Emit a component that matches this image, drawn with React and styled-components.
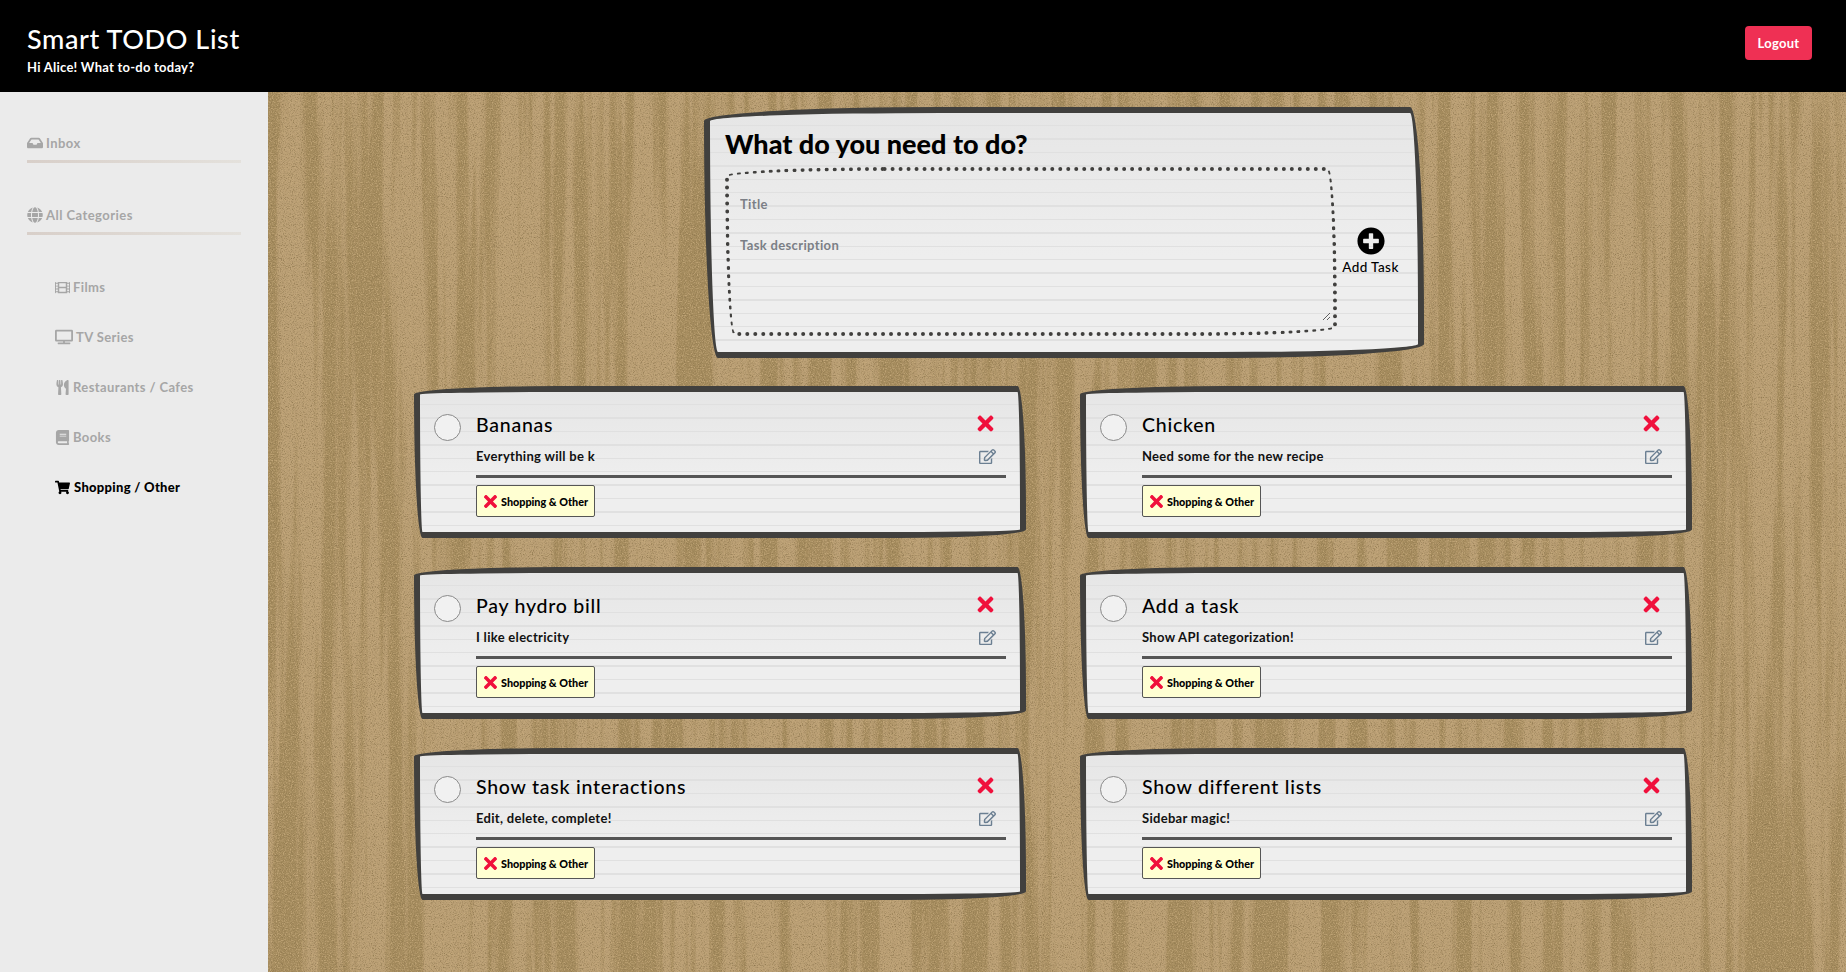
import React from "react";
import styled, { createGlobalStyle } from "styled-components";
import { FaInbox, FaGlobe, FaFilm, FaTv, FaUtensils, FaBook, FaShoppingCart, FaTimes, FaRegEdit, FaPlusCircle } from "react-icons/fa";

const woodSvg = `<svg xmlns='http://www.w3.org/2000/svg' width='1600' height='900'>
<filter id='w' x='0' y='0' width='100%' height='100%' color-interpolation-filters='sRGB'>
<feTurbulence type='fractalNoise' baseFrequency='0.06 0.0018' numOctaves='4' seed='11' result='s'/>
<feColorMatrix in='s' type='matrix' values='0 0 0 0 0.64  0 0 0 0 0.54  0 0 0 0 0.36  6 0 0 0 -2.7' result='dark'/>
<feTurbulence type='fractalNoise' baseFrequency='0.9' numOctaves='2' seed='4' result='g'/>
<feColorMatrix in='g' type='matrix' values='0 0 0 0 0.55  0 0 0 0 0.46  0 0 0 0 0.3  0 2.4 0 0 -1.15' result='grain'/>
<feTurbulence type='fractalNoise' baseFrequency='0.85' numOctaves='2' seed='9' result='h'/>
<feColorMatrix in='h' type='matrix' values='0 0 0 0 0.78  0 0 0 0 0.67  0 0 0 0 0.49  0 2.4 0 0 -1.1' result='glint'/>
<feMerge><feMergeNode in='dark'/><feMergeNode in='grain'/><feMergeNode in='glint'/></feMerge>
</filter>
<rect width='1600' height='900' fill='#ba9f75'/>
<rect width='1600' height='900' filter='url(#w)'/>
</svg>`;
const woodUrl = `url("data:image/svg+xml,${encodeURIComponent(woodSvg)}")`;

const sketch = "255px 15px 225px 15px / 15px 225px 15px 255px";
const UI = `Lato, "Noto Sans", sans-serif`;

const Global = createGlobalStyle`
  html, body { margin: 0; padding: 0; height: 100%; }
  body { font-family: ${UI}; overflow: hidden; }
  #root { height: 100%; }
  * { box-sizing: border-box; }
`;

const Page = styled.div`
  display: flex;
  flex-direction: column;
  height: 972px;
`;

const Header = styled.header`
  flex: 0 0 92px;
  background: #000;
  color: #fff;
  display: flex;
  align-items: center;
  justify-content: space-between;
  padding: 0 34px 0 27px;
`;

const Brand = styled.div`
  display: flex;
  flex-direction: column;
  gap: 4px;
  padding-top: 6px;
`;

const AppTitle = styled.h1`
  margin: 0;
  font-size: 27px;
  line-height: 32px;
  font-weight: 500;
  letter-spacing: 0.6px;
`;

const Subtitle = styled.p`
  margin: 0;
  font-size: 13px;
  line-height: 16px;
  font-weight: 700;
  letter-spacing: 0.25px;
`;

const LogoutButton = styled.button`
  width: 67px;
  height: 34px;
  margin-top: -6px;
  background: #ef3054;
  border: 0;
  border-radius: 4px;
  color: #fff;
  font: 700 13px ${UI};
  letter-spacing: 0.3px;
`;

const Body = styled.div`
  flex: 1;
  display: flex;
  min-height: 0;
`;

const Sidebar = styled.nav`
  flex: 0 0 268px;
  background: #ebebeb;
  padding: 26px 27px 0;
`;

const SectionLink = styled.div`
  padding-top: 14px;
  display: flex;
  align-items: center;
  gap: 3px;
  color: #a6a6a6;
  font-size: 13px;
  font-weight: 700;
  letter-spacing: 0.45px;
  height: 45px;
  border-bottom: 3px solid;
  border-image: linear-gradient(90deg, #d8cfc9, #e4e1dc) 1;
  margin-bottom: 27px;
  padding-bottom: 7px;
  svg { font-size: 16px; }
`;

const CategoryList = styled.div`
  display: flex;
  flex-direction: column;
  gap: 30px;
  padding-left: 28px;
  margin-top: 42px;
`;

const CategoryLink = styled.div`
  height: 20px;
  display: flex;
  align-items: center;
  gap: ${(p) => (p.$active ? 4 : 3)}px;
  color: ${(p) => (p.$active ? "#000" : "#a6a6a6")};
  font-size: 13px;
  font-weight: ${(p) => (p.$active ? 900 : 700)};
  letter-spacing: ${(p) => (p.$active ? 0.3 : 0.4)}px;
  svg { font-size: ${(p) => p.$icon || 15}px; }
`;

const Main = styled.main`
  flex: 1;
  background: #b0966b ${woodUrl} 0 0 / 1600px 900px;
  padding-top: 15px;
`;

const Paper = styled.div`
  border: 6px solid #41403e;
  border-radius: ${sketch};
  background-color: #ececec;
  background-image:
    repeating-linear-gradient(to bottom, transparent 0, transparent 12px, #e0e0e0 12px, #e0e0e0 13.4px),
    linear-gradient(to bottom, #e6e6e6, #eeeeee 60%);
`;

const Compose = styled(Paper)`
  width: 720px;
  height: 251px;
  margin-left: 436px;
  padding: 14px 14px 0 15px;
`;

const ComposeTitle = styled.h2`
  margin: 0 0 6px;
  font: 900 27px/34px Lato, sans-serif;
  color: #000;
`;

const ComposeRow = styled.div`
  display: flex;
  align-items: center;
`;

const DottedBox = styled.div`
  width: 612px;
  height: 169px;
  border: 4px dotted #41403e;
  border-radius: ${sketch};
  padding: 19px 2px 0 11px;
  display: flex;
  flex-direction: column;
`;

const TitleInput = styled.input`
  height: 28px;
  background: transparent;
  border: 0;
  outline: 0;
  padding: 0;
  font: 700 13px ${UI};
  letter-spacing: 0.35px;
  margin-bottom: 16px;
  &::placeholder { color: #7b7f86; }
`;

const DescInput = styled.textarea`
  height: 84px;
  background: transparent;
  border: 0;
  outline: 0;
  padding: 0;
  margin-top: 3px;
  font: 700 13px ${UI};
  letter-spacing: 0.35px;
  &::placeholder { color: #7b7f86; }
`;

const AddTask = styled.button`
  flex: 1;
  background: transparent;
  border: 0;
  padding: 0 0 2px;
  display: flex;
  flex-direction: column;
  align-items: center;
  gap: 4px;
  color: #000;
  font: 500 13.5px ${UI};
  letter-spacing: 0.4px;
  svg { font-size: 28px; }
`;

const Grid = styled.div`
  display: grid;
  grid-template-columns: 612px 612px;
  column-gap: 54px;
  row-gap: 29px;
  margin: 28px 0 0 146px;
`;

const Card = styled(Paper)`
  height: 152px;
  display: flex;
  padding: 22px 14px 0;
  gap: 15px;
`;

const Check = styled.div`
  flex: 0 0 27px;
  height: 27px;
  border-radius: 50%;
  border: 1px solid #8a8a8a;
  background: #f1f1f1;
`;

const CardBody = styled.div`
  flex: 1;
  min-width: 0;
`;

const CardTop = styled.div`
  display: flex;
  justify-content: space-between;
  align-items: center;
  height: 22px;
  padding-right: 10px;
  margin-top: -1px;
`;

const CardTitle = styled.h3`
  margin: 0;
  font-size: 19.5px;
  font-weight: 500;
  letter-spacing: 0.75px;
  color: #000;
`;

const DeleteIcon = styled(FaTimes)`
  color: #f0103c;
  font-size: 23px;
  margin-right: -1px;
  margin-top: -2px;
`;

const DescRow = styled.div`
  display: flex;
  justify-content: space-between;
  align-items: center;
  height: 20px;
  margin-top: 11px;
  padding-right: 10px;
  font-size: 13px;
  font-weight: 700;
  letter-spacing: 0.3px;
  color: #111;
`;

const EditIcon = styled(FaRegEdit)`
  color: #6b7f92;
  font-size: 17px;
`;

const Rule = styled.div`
  height: 3px;
  background: #555;
  margin: 9px 0 7px;
`;

const Tag = styled.div`
  width: 119px;
  height: 32px;
  background: #ffffd2;
  border: 1px solid #555;
  border-radius: 2px;
  display: flex;
  align-items: center;
  gap: 1px;
  padding-left: 4px;
  font-size: 10.8px;
  font-weight: 900;
  color: #000;
`;

const TagX = styled(FaTimes)`
  color: #f0103c;
  font-size: 19px;
`;

const tasks = [
  ["Bananas", "Everything will be k"],
  ["Chicken", "Need some for the new recipe"],
  ["Pay hydro bill", "I like electricity"],
  ["Add a task", "Show API categorization!"],
  ["Show task interactions", "Edit, delete, complete!"],
  ["Show different lists", "Sidebar magic!"],
];

export default function App() {
  return (
    <Page>
      <Global />
      <Header>
        <Brand>
          <AppTitle>Smart TODO List</AppTitle>
          <Subtitle>Hi Alice! What to-do today?</Subtitle>
        </Brand>
        <LogoutButton>Logout</LogoutButton>
      </Header>
      <Body>
        <Sidebar>
          <SectionLink><FaInbox />Inbox</SectionLink>
          <SectionLink><FaGlobe />All Categories</SectionLink>
          <CategoryList>
            <CategoryLink><FaFilm />Films</CategoryLink>
            <CategoryLink $icon={18}><FaTv />TV Series</CategoryLink>
            <CategoryLink><FaUtensils />Restaurants / Cafes</CategoryLink>
            <CategoryLink><FaBook />Books</CategoryLink>
            <CategoryLink $active><FaShoppingCart />Shopping / Other</CategoryLink>
          </CategoryList>
        </Sidebar>
        <Main>
          <Compose>
            <ComposeTitle>What do you need to do?</ComposeTitle>
            <ComposeRow>
              <DottedBox>
                <TitleInput placeholder="Title" />
                <DescInput placeholder="Task description" />
              </DottedBox>
              <AddTask><FaPlusCircle />Add Task</AddTask>
            </ComposeRow>
          </Compose>
          <Grid>
            {tasks.map(([title, desc]) => (
              <Card key={title}>
                <Check />
                <CardBody>
                  <CardTop>
                    <CardTitle>{title}</CardTitle>
                    <DeleteIcon />
                  </CardTop>
                  <DescRow>
                    <span>{desc}</span>
                    <EditIcon />
                  </DescRow>
                  <Rule />
                  <Tag><TagX />Shopping &amp; Other</Tag>
                </CardBody>
              </Card>
            ))}
          </Grid>
        </Main>
      </Body>
    </Page>
  );
}
